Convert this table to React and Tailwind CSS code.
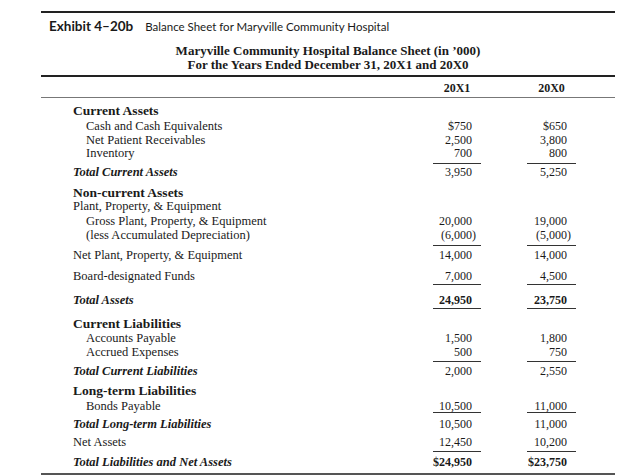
import React from 'react';

const rows = [
  { label: 'Current Assets', kind: 'head', h: 15 },
  { label: 'Cash and Cash Equivalents', kind: 'sub', h: 14, a: '$750', b: '$650' },
  { label: 'Net Patient Receivables', kind: 'sub', h: 13, a: '2,500', b: '3,800' },
  { label: 'Inventory', kind: 'sub', h: 19, a: '700', b: '800', ul: 18 },
  { label: 'Total Current Assets', kind: 'total', h: 21, a: '3,950', b: '5,250' },
  { label: 'Non-current Assets', kind: 'head', h: 13 },
  { label: 'Plant, Property, & Equipment', kind: 'plain', h: 15 },
  { label: 'Gross Plant, Property, & Equipment', kind: 'sub', h: 14, a: '20,000', b: '19,000' },
  { label: '(less Accumulated Depreciation)', kind: 'sub', h: 20, a: '(6,000)', b: '(5,000)', ul: 18 },
  { label: 'Net Plant, Property, & Equipment', kind: 'plain', h: 21, a: '14,000', b: '14,000' },
  { label: 'Board-designated Funds', kind: 'plain', h: 24, a: '7,000', b: '4,500', ul: 16 },
  { label: 'Total Assets', kind: 'total', h: 24, a: '24,950', b: '23,750', ul: 16, bold: true },
  { label: 'Current Liabilities', kind: 'head', h: 14 },
  { label: 'Accounts Payable', kind: 'sub', h: 14, a: '1,500', b: '1,800' },
  { label: 'Accrued Expenses', kind: 'sub', h: 19, a: '500', b: '750', ul: 17 },
  { label: 'Total Current Liabilities', kind: 'total', h: 20, a: '2,000', b: '2,550' },
  { label: 'Long-term Liabilities', kind: 'head', h: 15 },
  { label: 'Bonds Payable', kind: 'sub', h: 18, a: '10,500', b: '11,000', ul: 14 },
  { label: 'Total Long-term Liabilities', kind: 'total', h: 18, a: '10,500', b: '11,000' },
  { label: 'Net Assets', kind: 'plain', h: 20, a: '12,450', b: '10,200', ul: 17 },
  { label: 'Total Liabilities and Net Assets', kind: 'total', h: 18, a: '$24,950', b: '$23,750', bold: true },
];

const labelClass = (kind) => {
  switch (kind) {
    case 'head': return 'font-bold text-[13.5px]';
    case 'sub': return 'ml-[13px]';
    case 'total': return 'font-bold italic';
    default: return '';
  }
};

// keeps the closing paren hanging past the right edge, as in the printed table
const Amount = ({ value }) => {
  if (value.startsWith('(')) {
    return (
      <span>
        {value.slice(0, -1)}
        <span className="-mr-[4px]">)</span>
      </span>
    );
  }
  return <span>{value}</span>;
};

const Cell = ({ value, ul, bold, width }) => (
  <div className={`${width} shrink-0 text-[12px]`}>
    {value && (
      <div
        className={`pr-[9px] text-right ${bold ? 'font-bold' : ''} ${
          ul ? 'border-b border-[#333]' : ''
        }`}
        style={ul ? { height: ul } : undefined}
      >
        <Amount value={value} />
      </div>
    )}
  </div>
);

const Row = ({ row }) => (
  <div className="flex items-start" style={{ height: row.h }}>
    <div className="w-[392px] shrink-0 pl-[32px] text-[12.5px]">
      <div className={labelClass(row.kind)}>{row.label}</div>
    </div>
    <Cell value={row.a} ul={row.ul} bold={row.bold} width="w-[48px]" />
    <div className="w-[46px] shrink-0" />
    <Cell value={row.b} ul={row.ul} bold={row.bold} width="w-[49px]" />
  </div>
);

export default function App() {
  return (
    <div className="w-[631px] h-[475px] bg-white pt-[11px] pl-[41px] text-[#1a1a1a] overflow-hidden">
      <div className="w-[574px] border-t-2 border-[#222]">
        <div className="flex items-baseline h-[24px] pt-[6px] pl-[8px] font-['Lato','Open_Sans',sans-serif]">
          <span className="text-[13.5px] font-bold leading-[14px]">Exhibit 4–20b</span>
          <span className="ml-[12px] text-[11.5px] leading-[14px]">
            Balance Sheet for Maryville Community Hospital
          </span>
        </div>

        <div className="mt-[7px] mb-[3px] text-center font-['Liberation_Serif',serif] font-bold text-[13px] leading-[14px]">
          <div>Maryville Community Hospital Balance Sheet (in ’000)</div>
          <div>For the Years Ended December 31, 20X1 and 20X0</div>
        </div>

        <div className="border-t-2 border-[#222]" />

        <div className="flex items-center h-[21px] pt-[1px] border-b border-[#777] font-['Liberation_Serif',serif] font-bold text-[12px]">
          <div className="w-[392px] shrink-0" />
          <div className="w-[48px] shrink-0 text-center">20X1</div>
          <div className="w-[46px] shrink-0" />
          <div className="w-[49px] shrink-0 text-center">20X0</div>
        </div>

        <div className="pt-[6px] font-['Liberation_Serif',serif] leading-[14px]">
          {rows.map((row) => (
            <Row key={row.label} row={row} />
          ))}
        </div>

        <div className="border-t-2 border-[#555]" />
      </div>
    </div>
  );
}
